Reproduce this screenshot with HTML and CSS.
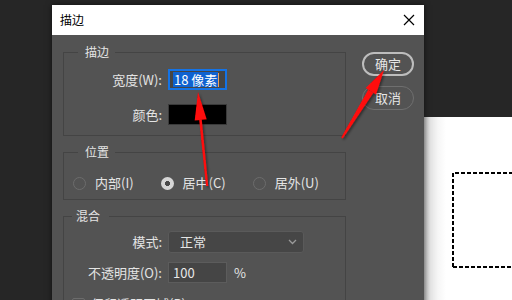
FILE: index.html
```html
<!DOCTYPE html>
<html lang="zh-CN">
<head>
<meta charset="utf-8">
<title>描边</title>
<link rel="stylesheet" href="styles.css">
</head>
<body>
<div class="canvas">
  <svg class="marquee" width="80" height="96" viewBox="0 0 80 96">
    <path d="M1 95 V1 H80 M1 95 H80" fill="none" stroke="#000" stroke-width="2" stroke-dasharray="4 2"/>
  </svg>
</div>

<div class="dialog">
  <div class="titlebar">
    <span class="title">描边</span>
    <svg class="close" width="12" height="12" viewBox="0 0 12 12">
      <path d="M1 1 L11 11 M11 1 L1 11" stroke="#000" stroke-width="1.2" fill="none"/>
    </svg>
  </div>
  <div class="body">
    <div class="groups">
      <fieldset class="group g1">
        <legend>描边</legend>
        <div class="rows">
          <div class="row">
            <span class="label">宽度(W):</span>
            <span class="input focus"><span class="sel">18 像素</span><span class="caret"></span></span>
          </div>
          <div class="row">
            <span class="label">颜色:</span>
            <span class="swatch"></span>
          </div>
        </div>
      </fieldset>

      <fieldset class="group g2">
        <legend>位置</legend>
        <div class="radios">
          <span class="radio"><span class="dot"></span>内部(I)</span>
          <span class="radio"><span class="dot on"></span>居中(C)</span>
          <span class="radio"><span class="dot"></span>居外(U)</span>
        </div>
      </fieldset>

      <fieldset class="group g3">
        <legend>混合</legend>
        <div class="rows tight">
          <div class="row">
            <span class="label">模式:</span>
            <span class="select">正常
              <svg class="chev" width="9" height="6" viewBox="0 0 9 6"><path d="M1 1 L4.5 4.5 L8 1" stroke="#9a9a9a" stroke-width="1.3" fill="none"/></svg>
            </span>
          </div>
          <div class="row">
            <span class="label">不透明度(O):</span>
            <span class="input">100</span>
            <span class="pct">%</span>
          </div>
          <div class="check-row">
            <span class="checkbox"></span>保留透明区域(P)
          </div>
        </div>
      </fieldset>
    </div>
    <div class="buttons">
      <span class="btn default">确定</span>
      <span class="btn">取消</span>
    </div>
  </div>
</div>

<svg class="arrows" width="512" height="300" viewBox="0 0 512 300">
  <defs>
    <filter id="sh" x="-20%" y="-20%" width="140%" height="140%">
      <feDropShadow dx="1.5" dy="1.5" stdDeviation="1.2" flood-color="#000" flood-opacity="0.45"/>
    </filter>
  </defs>
  <g fill="#ff0a0a" filter="url(#sh)">
    <polygon points="206,186 208.2,186 201.7,119.6 199.2,119.9"/>
    <polygon points="198,92 206.6,119.3 194.7,120.4"/>
    <polygon points="341.2,137.4 342.8,138.6 373.4,92.8 368.2,89.8"/>
    <polygon points="384,70 376,94.4 365.7,88.1"/>
  </g>
</svg>
</body>
</html>
```

FILE: styles.css
```css
* { box-sizing: border-box; }

html, body {
  margin: 0;
  width: 512px;
  height: 300px;
  overflow: hidden;
}

body {
  position: relative;
  background: #262626;
  font-family: "Noto Sans CJK SC", "Noto Sans", sans-serif;
  font-size: 13px;
  line-height: 16px;
  color: #e4e4e4;
}

.canvas {
  position: absolute;
  left: 424px;
  top: 117px;
  right: 0;
  bottom: 0;
  background: linear-gradient(to right, #bdbdbd 0, #e2e2e2 6px, #f6f6f6 14px, #fff 22px);
}

.marquee {
  position: absolute;
  left: 28px;
  top: 55px;
}

.dialog {
  position: absolute;
  left: 52px;
  top: 5px;
  width: 372px;
  height: 320px;
  background: #535353;
  box-shadow: 0 0 6px rgba(0, 0, 0, 0.55);
}

.titlebar {
  height: 30px;
  background: #fff;
  display: flex;
  align-items: center;
  justify-content: space-between;
  padding: 0 9px 0 8px;
}

.title {
  color: #000;
  font-size: 12px;
}

.close { display: block; }

.body {
  display: flex;
  padding: 9px 0 0 11px;
}

.groups {
  width: 283px;
  display: flex;
  flex-direction: column;
  gap: 8px;
}

.group {
  margin: 0;
  padding: 0;
  border: 1px solid #444;
  min-width: 0;
}

.group legend {
  margin-left: 14px;
  padding: 0 6px 0 7px;
  font-size: 12px;
  line-height: 16px;
}

.g3 legend {
  margin-left: 8px;
  padding: 0 9px 0 4px;
}

.rows {
  display: flex;
  flex-direction: column;
  gap: 14px;
  padding: 9px 0 10px;
}

.rows.tight {
  gap: 9px;
  padding-top: 7px;
}

.row {
  display: flex;
  align-items: center;
}

.label {
  width: 98px;
  text-align: right;
  margin-right: 6px;
}

.input {
  width: 59px;
  height: 21px;
  background: #454545;
  border: 1px solid #5c5c5c;
  padding: 0 4px;
  display: flex;
  align-items: center;
  color: #e8e8e8;
}

.input.focus {
  border: 2px solid #1473e6;
  padding: 0 3px;
}

.sel {
  background: #0f62d0;
  color: #fff;
  line-height: 15px;
  padding: 0 1px;
}

.caret {
  width: 1px;
  height: 14px;
  background: #e8a060;
}

.swatch {
  width: 59px;
  height: 21px;
  background: #000;
  border: 1px solid #3a3a3a;
}

.radios {
  display: flex;
  gap: 27px;
  padding: 15px 0 8px 9px;
}

.radio {
  display: flex;
  align-items: center;
  gap: 9px;
}

.dot {
  width: 13px;
  height: 13px;
  border-radius: 50%;
  border: 1.5px solid #6c6c6c;
}

.dot.on {
  border: none;
  background: radial-gradient(circle, #4a4a4a 0 2.3px, #d6d6d6 2.8px);
}

.select {
  width: 136px;
  height: 22px;
  background: #464646;
  border: 1px solid #5a5a5a;
  border-radius: 3px;
  padding: 0 6px 0 11px;
  display: flex;
  align-items: center;
  justify-content: space-between;
}

.chev { display: block; }

.pct {
  margin-left: 7px;
}

.check-row {
  display: flex;
  align-items: center;
  gap: 6px;
  padding-left: 8px;
  margin-top: 4px;
}

.checkbox {
  width: 13px;
  height: 13px;
  border: 1.5px solid #6c6c6c;
  border-radius: 2px;
}

.buttons {
  margin: 8px 0 0 16px;
  display: flex;
  flex-direction: column;
  gap: 10px;
}

.btn {
  width: 52px;
  height: 24px;
  border-radius: 12px;
  border: 1px solid #6f6f6f;
  display: flex;
  align-items: center;
  justify-content: center;
  color: #e6e6e6;
}

.btn.default {
  border: 2px solid #bdbdbd;
}

.arrows {
  position: absolute;
  left: 0;
  top: 0;
  pointer-events: none;
}
```
